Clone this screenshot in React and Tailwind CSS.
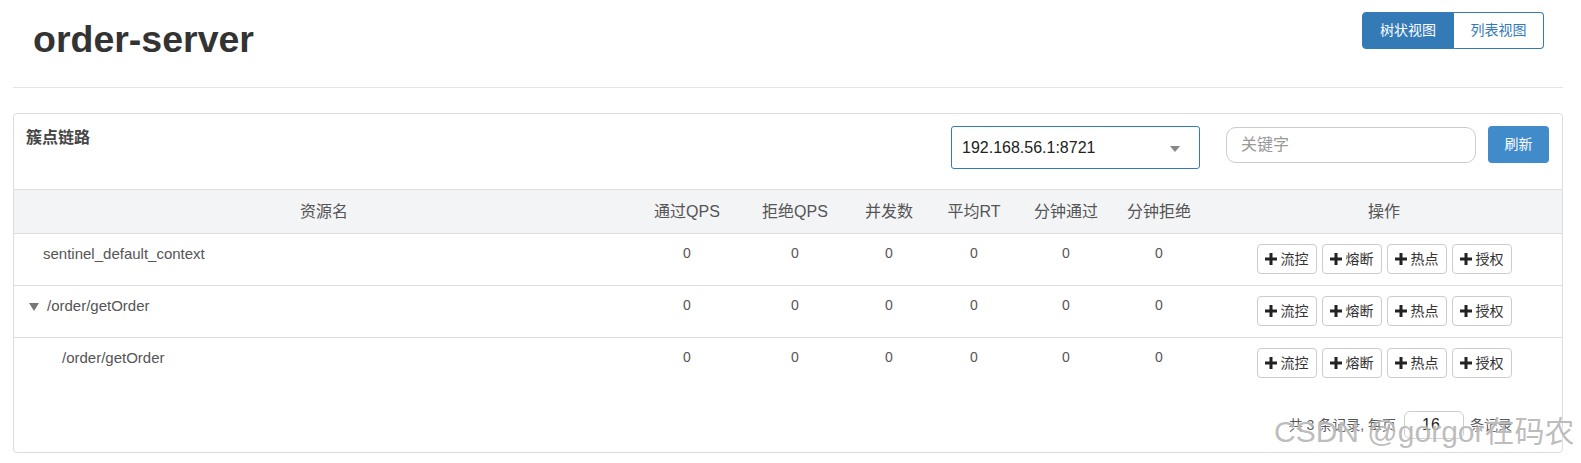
import React from "react";

const FONT = { fontFamily: '"Liberation Sans", Arial, "Noto Sans CJK SC", sans-serif' };

const COLS = "grid grid-cols-[620px_106px_110px_78px_92px_92px_94px_356px]";

const ROWS = [
  { name: "sentinel_default_context", indent: "pl-[29px]", toggle: false },
  { name: "/order/getOrder", indent: "pl-[15px]", toggle: true },
  { name: "/order/getOrder", indent: "pl-[48px]", toggle: false },
];

const ACTIONS = ["流控", "熔断", "热点", "授权"];

function Plus() {
  return (
    <svg width="12" height="12" viewBox="0 0 12 12" className="shrink-0">
      <rect x="4.5" y="0" width="3" height="12" fill="#222" />
      <rect x="0" y="4.5" width="12" height="3" fill="#222" />
    </svg>
  );
}

function ActionButton({ label }) {
  return (
    <button className="flex items-center justify-center gap-[4px] w-[60px] h-[30px] border border-[#ccc] rounded-[4px] bg-white text-[14px] text-[#333] leading-none">
      <Plus />
      <span>{label}</span>
    </button>
  );
}

export default function App() {
  return (
    <div className="relative w-[1581px] h-[463px] overflow-hidden bg-white text-[#333]" style={FONT}>
      <div className="pl-[13px] pr-[18px]">
        {/* page header */}
        <div className="flex justify-between items-start h-[87px]">
          <h1 className="pl-[20px] pt-[19px] text-[37.5px] leading-[40px] font-bold text-[#333]">order-server</h1>
          <div className="flex mt-[12px] mr-[19px] h-[37px] text-[14px]">
            <button className="w-[92px] h-full bg-[#337ab7] text-white rounded-l-[4px] border border-[#337ab7]">树状视图</button>
            <button className="w-[90px] h-full bg-white text-[#337ab7] rounded-r-[4px] border border-[#337ab7] border-l-0">列表视图</button>
          </div>
        </div>
        <div className="h-px bg-[#e5e5e5]" />

        {/* panel */}
        <div className="mt-[25px] border border-[#ddd] rounded-[4px] h-[340px]">
          <div className="flex items-start h-[75px]">
            <div className="pl-[12px] pt-[13px] text-[16px] leading-[22px] font-bold text-[#444]">簇点链路</div>
            <div className="ml-auto flex items-start pt-[12px] pr-[13px]">
              <div className="relative flex items-center w-[249px] h-[43px] border border-[#337ab7] rounded-[3px] pl-[10px] text-[16px] text-[#222]">
                192.168.56.1:8721
                <span className="absolute right-[19px] top-[19px] w-0 h-0 border-l-[5px] border-r-[5px] border-t-[6px] border-l-transparent border-r-transparent border-t-[#888]" />
              </div>
              <div className="ml-[26px] mt-[1px] flex items-center w-[250px] h-[36px] border border-[#ccc] rounded-[10px] pl-[14px] text-[16px] text-[#999]">
                关键字
              </div>
              <button className="ml-[12px] w-[61px] h-[37px] bg-[#428bca] text-white text-[14px] rounded-[4px]">刷新</button>
            </div>
          </div>

          {/* table header */}
          <div className={`${COLS} h-[45px] items-center bg-[#f3f4f5] border-y border-[#ddd] text-[16px] text-[#555]`}>
            <div className="text-center">资源名</div>
            <div className="text-center">通过QPS</div>
            <div className="text-center">拒绝QPS</div>
            <div className="text-center">并发数</div>
            <div className="text-center">平均RT</div>
            <div className="text-center">分钟通过</div>
            <div className="text-center">分钟拒绝</div>
            <div className="text-center">操作</div>
          </div>

          {/* rows */}
          {ROWS.map((row, i) => (
            <div
              key={i}
              className={`${COLS} text-[15px] leading-[21px] text-[#555] ${i < ROWS.length - 1 ? "border-b border-[#ddd] h-[52px]" : "h-[51px]"}`}
            >
              <div className={`flex items-start pt-[9px] ${row.indent}`}>
                {row.toggle && (
                  <span className="mt-[8px] mr-[8px] w-0 h-0 border-l-[5.5px] border-r-[5.5px] border-t-[8px] border-l-transparent border-r-transparent border-t-[#777]" />
                )}
                <span>{row.name}</span>
              </div>
              {[0, 1, 2, 3, 4, 5].map((c) => (
                <div key={c} className="text-center pt-[9px] text-[14px]">0</div>
              ))}
              <div className="flex justify-center gap-[5px] pt-[10px]">
                {ACTIONS.map((a) => (
                  <ActionButton key={a} label={a} />
                ))}
              </div>
            </div>
          ))}

          {/* pagination */}
          <div className="flex justify-end items-center pt-[22px] pr-[50px] text-[14px] text-[#555]">
            <span>共 3 条记录, 每页</span>
            <div className="ml-[8px] w-[60px] h-[28px] border border-[#ccc] rounded-[6px] flex items-center pl-[17px] text-[16px] text-[#222]">16</div>
            <span className="ml-[6px]">条记录</span>
          </div>
        </div>
      </div>

      {/* watermark */}
      <div
        className="absolute left-[1274px] top-[413px] text-[30px] leading-[38px] text-[#a0a0a0]/70 whitespace-nowrap pointer-events-none"
        style={{ fontFamily: '"Liberation Sans", Arial, "Noto Sans CJK SC", sans-serif', textShadow: "0 0 2px #fff" }}
      >
        CSDN @gorgor在码农
      </div>
    </div>
  );
}
